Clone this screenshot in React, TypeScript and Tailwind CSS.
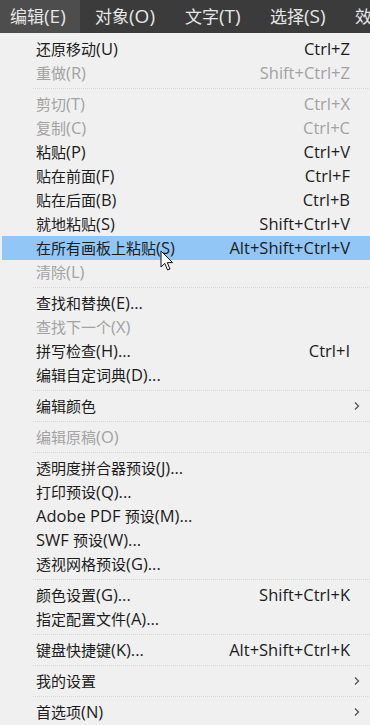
import React from "react";

type Item =
  | { sep: true }
  | { label: string; sc?: string; dis?: boolean; sub?: boolean; hl?: boolean; sep?: false };

const items: Item[] = [
  { label: "还原移动(U)", sc: "Ctrl+Z" },
  { label: "重做(R)", sc: "Shift+Ctrl+Z", dis: true },
  { sep: true },
  { label: "剪切(T)", sc: "Ctrl+X", dis: true },
  { label: "复制(C)", sc: "Ctrl+C", dis: true },
  { label: "粘贴(P)", sc: "Ctrl+V" },
  { label: "贴在前面(F)", sc: "Ctrl+F" },
  { label: "贴在后面(B)", sc: "Ctrl+B" },
  { label: "就地粘贴(S)", sc: "Shift+Ctrl+V" },
  { label: "在所有画板上粘贴(S)", sc: "Alt+Shift+Ctrl+V", hl: true },
  { label: "清除(L)", dis: true },
  { sep: true },
  { label: "查找和替换(E)..." },
  { label: "查找下一个(X)", dis: true },
  { label: "拼写检查(H)...", sc: "Ctrl+I" },
  { label: "编辑自定词典(D)..." },
  { sep: true },
  { label: "编辑颜色", sub: true },
  { sep: true },
  { label: "编辑原稿(O)", dis: true },
  { sep: true },
  { label: "透明度拼合器预设(J)..." },
  { label: "打印预设(Q)..." },
  { label: "Adobe PDF 预设(M)..." },
  { label: "SWF 预设(W)..." },
  { label: "透视网格预设(G)..." },
  { sep: true },
  { label: "颜色设置(G)...", sc: "Shift+Ctrl+K" },
  { label: "指定配置文件(A)..." },
  { sep: true },
  { label: "键盘快捷键(K)...", sc: "Alt+Shift+Ctrl+K" },
  { sep: true },
  { label: "我的设置", sub: true },
  { sep: true },
  { label: "首选项(N)", sub: true },
];

const font = { fontFamily: '"Open Sans", "Noto Sans CJK SC", sans-serif' };

function Mixed({ text, big }: { text: string; big: string }) {
  const parts = text.match(/[\u3000-\u9fff]+|[^\u3000-\u9fff]+/g) || [];
  return (
    <>
      {parts.map((p, i) =>
        /[\u3000-\u9fff]/.test(p) ? (
          <span key={i}>{p}</span>
        ) : (
          <span key={i} className={big}>
            {p}
          </span>
        )
      )}
    </>
  );
}

export default function App() {
  return (
    <div className="w-[370px] h-[725px] overflow-hidden bg-[#f0f0f0]" style={font}>
      <div className="h-[33px] bg-[#3b3b3b] flex items-stretch text-[17px] text-[#e6e6e6] whitespace-nowrap">
        <div className="bg-[#4d4d4d] w-[80px] shrink-0 pl-[10px] flex items-center">
          <Mixed text="编辑(E)" big="text-[19px]" />
        </div>
        <div className="w-[90px] shrink-0 pl-[15px] flex items-center">
          <Mixed text="对象(O)" big="text-[19px]" />
        </div>
        <div className="w-[85px] shrink-0 pl-[15px] flex items-center">
          <Mixed text="文字(T)" big="text-[19px]" />
        </div>
        <div className="w-[85px] shrink-0 pl-[15px] flex items-center">
          <Mixed text="选择(S)" big="text-[19px]" />
        </div>
        <div className="shrink-0 pl-[15px] flex items-center">效</div>
      </div>
      <div className="relative pt-[4px] text-[15px] leading-none">
        {items.map((it, i) =>
          it.sep ? (
            <div key={i} className="h-[7px] flex items-center pl-[33px]">
              <div className="w-full border-t border-dotted border-[#d6d6d6]" />
            </div>
          ) : (
            <div
              key={i}
              className={
                "h-[24px] flex items-center pl-[34px] pr-[20px] ml-[2px] whitespace-nowrap " +
                (it.hl ? "bg-[#91c6f6] " : "") +
                (it.dis ? "text-[#a2a2a2]" : "text-[#1c1c1c]")
              }
            >
              <span className="flex-1">
                <Mixed text={it.label} big="text-[16.5px]" />
              </span>
              {it.sc && <span className="text-[16.5px]">{it.sc}</span>}
              {it.sub && (
                <svg width="8" height="10" viewBox="0 0 8 10" className="-mr-[11px]">
                  <path d="M2 1.5 L5.5 5 L2 8.5" stroke="#555" strokeWidth="1.3" fill="none" />
                </svg>
              )}
            </div>
          )
        )}
        <svg
          className="absolute left-[160px] top-[217px]"
          width="14"
          height="22"
          viewBox="0 0 14 22"
        >
          <path
            d="M1 1 L1 17 L4.8 13.4 L7.6 20 L10 19 L7.3 12.6 L12.5 12.6 Z"
            fill="#ffffff"
            stroke="#111"
            strokeWidth="1"
            strokeLinejoin="round"
          />
        </svg>
      </div>
    </div>
  );
}
